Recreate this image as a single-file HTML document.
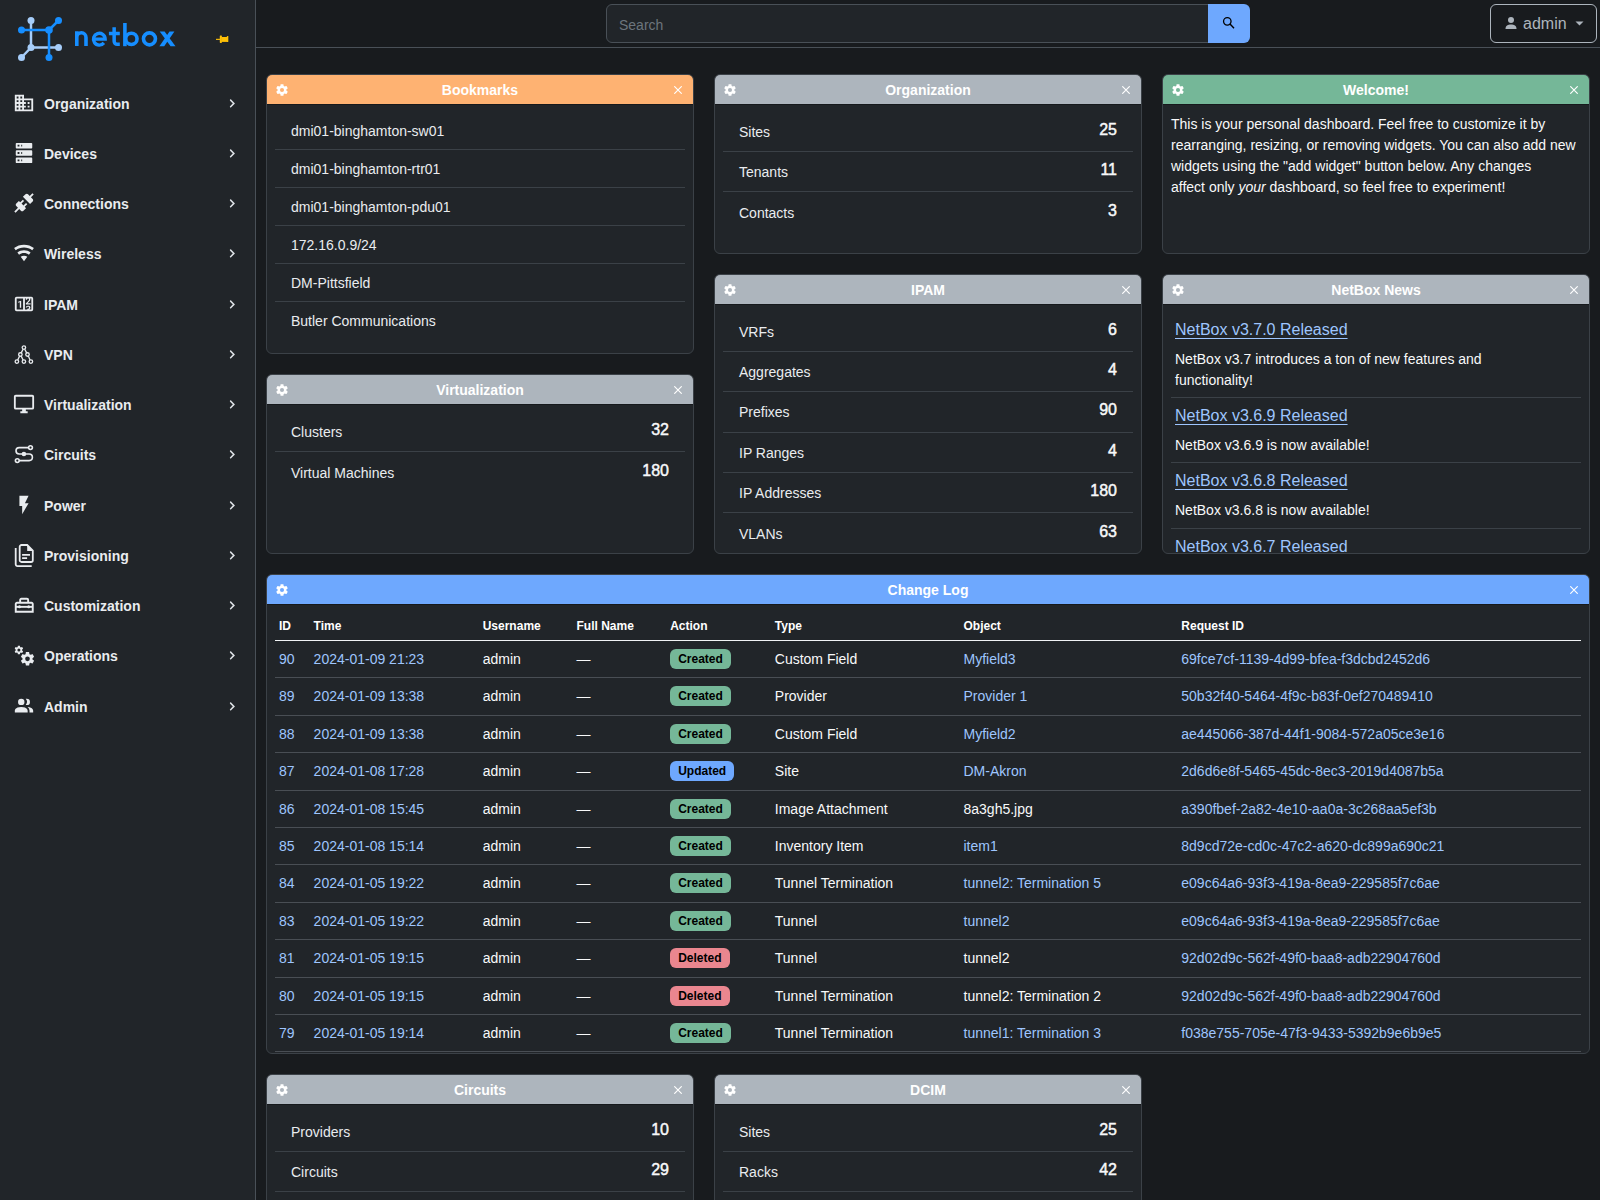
<!DOCTYPE html>
<html><head><meta charset="utf-8">
<style>
*{box-sizing:border-box;margin:0;padding:0}
html,body{width:1600px;height:1200px;overflow:hidden}
body{background:#181b1e;font-family:"Liberation Sans",sans-serif;font-size:14px;line-height:21px;color:#f8f9fa;position:relative}
.sb{position:absolute;left:0;top:0;width:256px;height:1200px;background:#212529;border-right:1px solid #495057}
.nav{position:absolute;left:0;width:255px;height:40px}
.nav .ic{position:absolute;left:13px;top:0;width:22px;height:22px}
.nav .ic svg{width:22px;height:22px;fill:#e9ecef;display:block}
.nav .t{position:absolute;left:44px;top:0;font-weight:bold;font-size:14px;line-height:21px;color:#e9ecef}
.nav .ch{position:absolute;left:229px;top:0}
.top{position:absolute;left:256px;top:0;width:1344px;height:48px;border-bottom:1px solid #495057;background:#181b1e}
.search{position:absolute;left:606px;top:4px;width:603px;height:39px;border:1px solid #495057;border-radius:6px 0 0 6px;background:#212529;color:#6c757d;padding:10px 12px 0 12px;font-size:14px;line-height:21px}
.sbtn{position:absolute;left:1208px;top:4px;width:42px;height:39px;background:#6ea8fe;border-radius:0 6px 6px 0}
.admin{position:absolute;left:1490px;top:4px;width:107px;height:39px;border:1px solid #adb5bd;border-radius:6px;color:#adb5bd;font-size:16px;line-height:21px}
.card{position:absolute;background:#212529;border:1px solid #3b4147;border-radius:6px;overflow:hidden}
.ch2{height:30px;border-bottom:1px solid #16191c;position:relative;text-align:center;color:#fff;font-weight:bold;line-height:30px;padding-top:0;font-size:14px}
.ch2 .g{position:absolute;left:8px;top:7.5px;width:14px;height:14px}
.ch2 .x{position:absolute;right:11px;top:10.5px;width:8px;height:8px}
.orange{background:#feb272}.gray{background:#adb5bd}.green{background:#75b798}.blue{background:#6ea8fe}
.body{padding:7px 8px 0 8px}
.li{border-bottom:1px solid #3b4147;padding:9px 16px 7px;line-height:21px;color:#e9ecef}
.li:last-child{border-bottom:0}
.cnt{display:flex;justify-content:space-between;align-items:center;height:40.2px;padding:0 16px;border-bottom:1px solid #3b4147;color:#e9ecef}
.cnt:last-child{border-bottom:0}
.cnt span{position:relative;top:1px}
.cnt b{font-size:16px;line-height:19px;margin-bottom:4px;font-weight:normal;-webkit-text-stroke:0.45px #f8f9fa;color:#f8f9fa}
a,.lk{color:#9ec5fe;text-decoration:none}
.welcome{padding:1.5px 0 0 0;color:#f8f9fa;line-height:21px}
.news{border-bottom:1px solid #3b4147;padding:8px 4px}
.nt{font-size:16px;color:#9ec5fe;text-decoration:underline;text-underline-offset:3px;line-height:19.2px;margin-bottom:8px}
.nd{color:#f8f9fa;position:relative;top:1.5px}
.tbl{position:relative}
.thr{position:relative;height:36px;margin-top:-7px;margin-left:0;border-bottom:1px solid #f1f3f5;font-weight:bold;font-size:12px}
.thr .td{position:absolute;top:12px;padding:0 4px;line-height:18px;color:#fff}
.tr{position:relative;height:37.42px;border-bottom:1px solid #494e54}
.tr .td{position:absolute;top:8px;padding:0 4px;line-height:21px;white-space:nowrap;color:#f8f9fa}
.badge{display:inline-block;font-size:12px;font-weight:bold;line-height:12px;padding:4px 8px;border-radius:6px;color:#000;vertical-align:1px}
.bg-g{background:#75b798}.bg-b{background:#6ea8fe}.bg-r{background:#ea868f}
</style></head><body>

<!-- SIDEBAR -->
<div class="sb">
  <svg style="position:absolute;left:0;top:0" width="256" height="70">
    <g stroke-linecap="round">
      <line x1="31" y1="20.5" x2="31" y2="47.5" stroke="#a6cdf9" stroke-width="2.5"/>
      <line x1="31" y1="47.5" x2="58.5" y2="47.5" stroke="#a6cdf9" stroke-width="2.5"/>
      <line x1="31" y1="47.5" x2="21.5" y2="57.5" stroke="#a6cdf9" stroke-width="2.5"/>
      <circle cx="31" cy="20.5" r="3.5" fill="#a6cdf9"/>
      <circle cx="31" cy="47.5" r="3.5" fill="#a6cdf9"/>
      <circle cx="21.5" cy="57.5" r="3.5" fill="#a6cdf9"/>
      <circle cx="58.5" cy="47.5" r="3.5" fill="#a6cdf9"/>
      <line x1="21.5" y1="30" x2="49" y2="30" stroke="#168eff" stroke-width="2.5"/>
      <line x1="49" y1="30" x2="49" y2="57.5" stroke="#168eff" stroke-width="2.5"/>
      <line x1="49" y1="30" x2="58.5" y2="20.5" stroke="#168eff" stroke-width="2.5"/>
      <circle cx="21.5" cy="30" r="3.5" fill="#168eff"/>
      <circle cx="49" cy="30" r="3.8" fill="#168eff"/>
      <circle cx="58.5" cy="20.5" r="3.5" fill="#168eff"/>
      <circle cx="49" cy="57.5" r="3.5" fill="#168eff"/>
    </g>
    <g fill="none" stroke="#168eff" stroke-width="3.6">
      <path d="M76.8 46V31.3M76.8 37.4A4.6 4.6 0 0 1 86 37.4V46"/>
      <path d="M93.6 39.1H105.2A5.9 5.9 0 1 0 103.9 42.9" stroke-width="3.3"/>
      <path d="M114.15 27.2V41.3A3 3 0 0 0 117.15 44.3H119.8M108.9 33.6H119.8" stroke-width="3.5"/>
      <path d="M124.9 23V46.2"/>
      <circle cx="131.4" cy="38.85" r="5.65"/>
      <circle cx="149.45" cy="38.85" r="6"/>
    </g>
    <g fill="#168eff">
      <polygon points="159.7,31.5 164.6,31.5 175.5,46.2 170.6,46.2"/>
      <polygon points="169.5,31.5 174.4,31.5 164.2,46.2 159.4,46.2"/>
    </g>
    <g fill="#ffc107">
      <rect x="216" y="38.8" width="4.5" height="1.1"/>
      <rect x="219.8" y="35.5" width="2.1" height="7.4" rx="0.6"/>
      <rect x="221.5" y="37" width="5.8" height="4.9"/>
      <rect x="226.9" y="35.9" width="1.4" height="6.1" rx="0.5"/>
    </g>
  </svg>
  <div class="nav" style="top:93.65px"><div class="ic" style="top:-2px"><svg viewBox="0 0 24 24" overflow="visible"><path d="M18,15H16V17H18M18,11H16V13H18M20,19H12V17H14V15H12V13H14V11H12V9H20M10,7H8V5H10M10,11H8V9H10M10,15H8V13H10M10,19H8V17H10M6,7H4V5H6M6,11H4V9H6M6,15H4V13H6M6,19H4V17H6M12,7V3H2V21H22V7H12Z"/></svg></div><div class="t">Organization</div><svg class="ch" style="top:5px" width="7" height="9" viewBox="0 0 7 9"><path d="M1.6 1.1L4.9 4.4L1.6 7.7" fill="none" stroke="#dee2e6" stroke-width="1.5" stroke-linecap="round"/></svg></div>
<div class="nav" style="top:143.90px"><div class="ic" style="top:-2px"><svg viewBox="0 0 24 24" overflow="visible"><path d="M4,1H20A1,1 0 0,1 21,2V6A1,1 0 0,1 20,7H4A1,1 0 0,1 3,6V2A1,1 0 0,1 4,1M4,9H20A1,1 0 0,1 21,10V14A1,1 0 0,1 20,15H4A1,1 0 0,1 3,14V10A1,1 0 0,1 4,9M4,17H20A1,1 0 0,1 21,18V22A1,1 0 0,1 20,23H4A1,1 0 0,1 3,22V18A1,1 0 0,1 4,17M9,5H10V3H9V5M9,13H10V11H9V13M9,21H10V19H9V21M5,3V5H7V3H5M5,11V13H7V11H5M5,19V21H7V19H5Z"/></svg></div><div class="t">Devices</div><svg class="ch" style="top:5px" width="7" height="9" viewBox="0 0 7 9"><path d="M1.6 1.1L4.9 4.4L1.6 7.7" fill="none" stroke="#dee2e6" stroke-width="1.5" stroke-linecap="round"/></svg></div>
<div class="nav" style="top:194.15px"><div class="ic" style="top:-2px"><svg viewBox="0 0 24 24" overflow="visible"><path d="M21.4 7.5C22.2 8.3 22.2 9.6 21.4 10.3L18.6 13.1L10.8 5.3L13.6 2.5C14.4 1.7 15.7 1.7 16.4 2.5L18.2 4.3L21.2 1.3L22.6 2.7L19.6 5.7L21.4 7.5M15.6 13.3L14.2 11.9L11.4 14.7L9.3 12.6L12.1 9.8L10.7 8.4L7.9 11.2L6.4 9.8L3.6 12.6C2.8 13.4 2.8 14.7 3.6 15.4L5.4 17.2L1.4 21.2L2.8 22.6L6.8 18.6L8.6 20.4C9.4 21.2 10.7 21.2 11.4 20.4L14.2 17.6L12.8 16.2L15.6 13.3Z"/></svg></div><div class="t">Connections</div><svg class="ch" style="top:5px" width="7" height="9" viewBox="0 0 7 9"><path d="M1.6 1.1L4.9 4.4L1.6 7.7" fill="none" stroke="#dee2e6" stroke-width="1.5" stroke-linecap="round"/></svg></div>
<div class="nav" style="top:244.40px"><div class="ic" style="top:-2px"><svg viewBox="0 0 24 24" overflow="visible"><path d="M12,21L15.6,16.2C14.6,15.45 13.35,15 12,15C10.65,15 9.4,15.45 8.4,16.2L12,21M12,3C7.95,3 4.21,4.34 1.2,6.6L3,9C5.5,7.12 8.62,6 12,6C15.38,6 18.5,7.12 21,9L22.8,6.6C19.79,4.34 16.05,3 12,3M12,9C9.3,9 6.81,9.89 4.8,11.4L6.6,13.8C8.1,12.67 9.97,12 12,12C14.03,12 15.9,12.670 17.4,13.8L19.2,11.4C17.19,9.89 14.7,9 12,9Z"/></svg></div><div class="t">Wireless</div><svg class="ch" style="top:5px" width="7" height="9" viewBox="0 0 7 9"><path d="M1.6 1.1L4.9 4.4L1.6 7.7" fill="none" stroke="#dee2e6" stroke-width="1.5" stroke-linecap="round"/></svg></div>
<div class="nav" style="top:294.65px"><div class="ic" style="top:-2px"><svg viewBox="0 0 24 24" overflow="visible"><path d="M4,4H20A2,2 0 0,1 22,6V18A2,2 0 0,1 20,20H4A2,2 0 0,1 2,18V6A2,2 0 0,1 4,4M4,6V18H11V6H4M20,18V6H18.76C19,6.54 18.950,7.07 18.95,7.13C18.88,7.8 18.41,8.5 18.24,8.75L15.91,11.3L19.23,11.28L19.24,12.5L14.04,12.47L14,11.47C14,11.47 17.05,8.24 17.2,7.95C17.34,7.67 17.91,6 16.5,6C15.27,6.05 15.41,7.3 15.41,7.3L13.87,7.31C13.87,7.31 13.88,6.65 14.25,6H13V18H15.58L15.57,17.14L16.54,17.13C16.54,17.13 17.45,16.97 17.46,16.08C17.5,15.08 16.65,15.08 16.5,15.08C16.37,15.08 15.43,15.13 15.43,15.95H13.91C13.910,15.95 13.95,13.89 16.5,13.89C19.1,13.89 18.96,15.91 18.96,15.91C18.96,15.91 19,17.16 17.85,17.63L18.37,18H20M8.92,16H7.42V10.2L5.62,10.76V9.53L8.76,8.41H8.92V16Z"/></svg></div><div class="t">IPAM</div><svg class="ch" style="top:5px" width="7" height="9" viewBox="0 0 7 9"><path d="M1.6 1.1L4.9 4.4L1.6 7.7" fill="none" stroke="#dee2e6" stroke-width="1.5" stroke-linecap="round"/></svg></div>
<div class="nav" style="top:344.90px"><div class="ic" style="top:-2px"><svg viewBox="0 0 24 24" overflow="visible"><g transform="scale(1.0909) translate(-1 -1)"><g fill="none" stroke="#e9ecef" stroke-width="1.3"><circle cx="11.9" cy="5.6" r="1.75"/><circle cx="8.4" cy="12.5" r="1.75"/><circle cx="15.5" cy="12.5" r="1.75"/><circle cx="4.9" cy="19.6" r="1.75"/><circle cx="11.9" cy="19.6" r="1.75"/><circle cx="18.9" cy="19.6" r="1.75"/><path d="M11.1 7.2L9.2 10.9M12.7 7.2L14.7 10.9M7.6 14.1L5.7 18M9.2 14.1L11.1 18M16.3 14.1L18.1 18"/></g></g></svg></div><div class="t">VPN</div><svg class="ch" style="top:5px" width="7" height="9" viewBox="0 0 7 9"><path d="M1.6 1.1L4.9 4.4L1.6 7.7" fill="none" stroke="#dee2e6" stroke-width="1.5" stroke-linecap="round"/></svg></div>
<div class="nav" style="top:395.15px"><div class="ic" style="top:-2px"><svg viewBox="0 0 24 24" overflow="visible"><path d="M21,16H3V4H21M21,2H3C1.89,2 1,2.89 1,4V16A2,2 0 0,0 3,18H10V20H8V22H16V20H14V18H21A2,2 0 0,0 23,16V4C23,2.89 22.1,2 21,2Z"/></svg></div><div class="t">Virtualization</div><svg class="ch" style="top:5px" width="7" height="9" viewBox="0 0 7 9"><path d="M1.6 1.1L4.9 4.4L1.6 7.7" fill="none" stroke="#dee2e6" stroke-width="1.5" stroke-linecap="round"/></svg></div>
<div class="nav" style="top:445.40px"><div class="ic" style="top:-2px"><svg viewBox="0 0 24 24" overflow="visible"><g transform="scale(1.0909) translate(-1 -1)"><g fill="none" stroke="#e9ecef" stroke-width="1.6"><circle cx="18.5" cy="5.6" r="1.9"/><circle cx="5.3" cy="18.6" r="1.9"/><path d="M16.6 5.6H7.2A3.2 3.2 0 0 0 7.2 12H17.1A3.3 3.3 0 0 1 17.1 18.6H7.2"/></g><circle cx="11.9" cy="12" r="2.3" fill="#e9ecef"/></g></svg></div><div class="t">Circuits</div><svg class="ch" style="top:5px" width="7" height="9" viewBox="0 0 7 9"><path d="M1.6 1.1L4.9 4.4L1.6 7.7" fill="none" stroke="#dee2e6" stroke-width="1.5" stroke-linecap="round"/></svg></div>
<div class="nav" style="top:495.65px"><div class="ic" style="top:-2px"><svg viewBox="0 0 24 24" overflow="visible"><path d="M7,2V13H10V22L17,10H13L17,2H7Z"/></svg></div><div class="t">Power</div><svg class="ch" style="top:5px" width="7" height="9" viewBox="0 0 7 9"><path d="M1.6 1.1L4.9 4.4L1.6 7.7" fill="none" stroke="#dee2e6" stroke-width="1.5" stroke-linecap="round"/></svg></div>
<div class="nav" style="top:545.90px"><div class="ic" style="top:-2px"><svg viewBox="0 0 24 24" overflow="visible"><g transform="scale(1.0909) translate(-1 -1)"><g fill="none" stroke="#e9ecef" stroke-width="1.8"><path d="M9.5 2H15.2L20.8 7.6V17.2A1.8 1.8 0 0 1 19 19H9.5A1.8 1.8 0 0 1 7.7 17.2V3.8A1.8 1.8 0 0 1 9.5 2Z"/><path d="M3.7 5.1V21.3A1.8 1.8 0 0 0 5.5 23.1H19.7"/><path d="M10.1 11.9H18M10.1 15.2H15.1"/></g><path d="M15.2 2V7.9H20.9Z" fill="#e9ecef"/></g></svg></div><div class="t">Provisioning</div><svg class="ch" style="top:5px" width="7" height="9" viewBox="0 0 7 9"><path d="M1.6 1.1L4.9 4.4L1.6 7.7" fill="none" stroke="#dee2e6" stroke-width="1.5" stroke-linecap="round"/></svg></div>
<div class="nav" style="top:596.15px"><div class="ic" style="top:-2px"><svg viewBox="0 0 24 24" overflow="visible"><g transform="scale(1.0909) translate(-1 -1)"><g fill="none" stroke="#e9ecef" stroke-width="1.9"><path d="M3.75 18.8V11A1.2 1.2 0 0 1 4.95 9.8H19.55A1.2 1.2 0 0 1 20.75 11V18.8Z"/><path d="M8.15 9.8V6.9A1.2 1.2 0 0 1 9.35 5.7H14.95A1.2 1.2 0 0 1 16.15 6.9V9.8"/><path d="M3.75 13.85H20.75"/></g><circle cx="7.5" cy="13.85" r="1.5" fill="#e9ecef"/><circle cx="16.7" cy="13.85" r="1.5" fill="#e9ecef"/></g></svg></div><div class="t">Customization</div><svg class="ch" style="top:5px" width="7" height="9" viewBox="0 0 7 9"><path d="M1.6 1.1L4.9 4.4L1.6 7.7" fill="none" stroke="#dee2e6" stroke-width="1.5" stroke-linecap="round"/></svg></div>
<div class="nav" style="top:646.40px"><div class="ic" style="top:-2px"><svg viewBox="0 0 24 24" overflow="visible"><g transform="scale(1.0909) translate(-1 -1)"><g transform="translate(7.46,7.76) scale(0.67)"><path d="M12,15.5A3.5,3.5 0 0,1 8.5,12A3.5,3.5 0 0,1 12,8.5A3.5,3.5 0 0,1 15.5,12A3.5,3.5 0 0,1 12,15.5M19.43,12.97C19.47,12.65 19.5,12.33 19.5,12C19.5,11.67 19.47,11.34 19.43,11L21.54,9.37C21.73,9.22 21.78,8.95 21.66,8.73L19.66,5.27C19.54,5.05 19.27,4.96 19.05,5.05L16.56,6.05C16.04,5.66 15.5,5.32 14.87,5.07L14.5,2.42C14.46,2.18 14.25,2 14,2H10C9.750,2 9.54,2.18 9.5,2.42L9.13,5.07C8.5,5.32 7.96,5.66 7.44,6.05L4.95,5.05C4.73,4.96 4.46,5.05 4.34,5.27L2.34,8.73C2.21,8.95 2.27,9.22 2.46,9.37L4.57,11C4.53,11.34 4.5,11.67 4.5,12C4.5,12.33 4.53,12.65 4.57,12.97L2.46,14.63C2.27,14.78 2.21,15.05 2.34,15.27L4.34,18.73C4.46,18.95 4.73,19.03 4.95,18.95L7.44,17.94C7.96,18.34 8.5,18.68 9.13,18.93L9.5,21.58C9.54,21.820 9.75,22 10,22H14C14.25,22 14.46,21.82 14.5,21.58L14.87,18.93C15.5,18.67 16.04,18.34 16.56,17.94L19.05,18.95C19.27,19.03 19.54,18.95 19.66,18.73L21.66,15.27C21.78,15.05 21.73,14.78 21.54,14.63L19.43,12.97Z"/></g><g transform="translate(1.74,1.84) scale(0.43)"><path d="M12,15.5A3.5,3.5 0 0,1 8.5,12A3.5,3.5 0 0,1 12,8.5A3.5,3.5 0 0,1 15.5,12A3.5,3.5 0 0,1 12,15.5M19.43,12.97C19.47,12.65 19.5,12.33 19.5,12C19.5,11.67 19.47,11.34 19.43,11L21.54,9.37C21.73,9.22 21.78,8.95 21.66,8.73L19.66,5.27C19.54,5.05 19.27,4.96 19.05,5.05L16.56,6.05C16.04,5.66 15.5,5.32 14.87,5.07L14.5,2.42C14.46,2.18 14.25,2 14,2H10C9.75,2 9.54,2.18 9.5,2.42L9.13,5.07C8.5,5.32 7.96,5.66 7.44,6.05L4.95,5.05C4.73,4.96 4.46,5.05 4.34,5.27L2.34,8.73C2.21,8.95 2.27,9.22 2.46,9.37L4.57,11C4.53,11.34 4.5,11.67 4.5,12C4.5,12.33 4.53,12.65 4.57,12.97L2.46,14.63C2.27,14.78 2.21,15.05 2.34,15.27L4.34,18.73C4.46,18.95 4.73,19.03 4.95,18.95L7.44,17.94C7.96,18.34 8.5,18.68 9.13,18.93L9.5,21.58C9.54,21.82 9.75,22 10,22H14C14.25,22 14.46,21.82 14.5,21.58L14.87,18.93C15.5,18.67 16.04,18.34 16.56,17.94L19.05,18.95C19.27,19.03 19.54,18.95 19.66,18.73L21.66,15.27C21.78,15.05 21.73,14.78 21.54,14.63L19.43,12.97Z"/></g></g></svg></div><div class="t">Operations</div><svg class="ch" style="top:5px" width="7" height="9" viewBox="0 0 7 9"><path d="M1.6 1.1L4.9 4.4L1.6 7.7" fill="none" stroke="#dee2e6" stroke-width="1.5" stroke-linecap="round"/></svg></div>
<div class="nav" style="top:696.65px"><div class="ic" style="top:-2px"><svg viewBox="0 0 24 24" overflow="visible"><path d="M16 17V19H2V17S2 13 9 13 16 17 16 17M12.5 7.5A3.5 3.5 0 1 0 9 11A3.5 3.5 0 0 0 12.5 7.5M15.94 13A5.32 5.32 0 0 1 18 17V19H22V17S22 13.37 15.94 13M15 4A3.39 3.39 0 0 0 13.880 4.19A5 5 0 0 1 13.88 10.81A3.39 3.39 0 0 0 15 11A3.5 3.5 0 0 0 18.5 7.5A3.5 3.5 0 0 0 15 4Z"/></svg></div><div class="t">Admin</div><svg class="ch" style="top:5px" width="7" height="9" viewBox="0 0 7 9"><path d="M1.6 1.1L4.9 4.4L1.6 7.7" fill="none" stroke="#dee2e6" stroke-width="1.5" stroke-linecap="round"/></svg></div>
</div>

<!-- TOP BAR -->
<div class="top"></div>
<div class="search">Search</div>
<div class="sbtn"><svg style="position:absolute;left:12px;top:11px" width="18" height="18" viewBox="0 0 18 18"><circle cx="7.3" cy="6.3" r="3.75" fill="none" stroke="#000" stroke-width="1.3"/><line x1="10" y1="9" x2="14" y2="13.2" stroke="#000" stroke-width="1.4"/></svg></div>
<div class="admin">
  <svg style="position:absolute;left:13px;top:11px" width="14" height="14" viewBox="0 0 14 14"><circle cx="7" cy="4" r="3" fill="#adb5bd"/><path d="M1.5 13 C1.5 9.5 4 8.6 7 8.6 C10 8.6 12.5 9.5 12.5 13Z" fill="#adb5bd"/></svg>
  <span style="position:absolute;left:32px;top:8px">admin</span>
  <svg style="position:absolute;left:84px;top:16px" width="10" height="6"><path d="M0.5 0.5 L8.5 0.5 L4.5 4.5Z" fill="#adb5bd"/></svg>
</div>

<div class="card" style="left:266px;top:74px;width:428px;height:280px"><div class="ch2 orange"><svg class="g" viewBox="0 0 24 24"><path fill="#fff" d="M12,15.5A3.5,3.5 0 0,1 8.5,12A3.5,3.5 0 0,1 12,8.5A3.5,3.5 0 0,1 15.5,12A3.5,3.5 0 0,1 12,15.5M19.43,12.97C19.47,12.65 19.5,12.33 19.5,12C19.5,11.67 19.47,11.34 19.43,11L21.54,9.37C21.73,9.22 21.78,8.95 21.66,8.73L19.66,5.27C19.54,5.05 19.27,4.96 19.05,5.05L16.56,6.05C16.04,5.66 15.5,5.32 14.87,5.07L14.5,2.42C14.46,2.18 14.25,2 14,2H10C9.75,2 9.54,2.18 9.5,2.42L9.13,5.07C8.5,5.32 7.96,5.66 7.44,6.05L4.95,5.05C4.73,4.96 4.46,5.05 4.34,5.27L2.34,8.73C2.21,8.95 2.27,9.22 2.46,9.37L4.57,11C4.53,11.34 4.5,11.67 4.5,12C4.5,12.33 4.53,12.65 4.57,12.97L2.46,14.63C2.27,14.78 2.21,15.05 2.34,15.27L4.34,18.73C4.46,18.95 4.73,19.03 4.95,18.95L7.44,17.94C7.96,18.34 8.5,18.68 9.13,18.93L9.5,21.58C9.54,21.82 9.75,22 10,22H14C14.25,22 14.46,21.82 14.5,21.58L14.87,18.93C15.5,18.67 16.04,18.34 16.56,17.94L19.05,18.95C19.27,19.03 19.54,18.95 19.66,18.73L21.66,15.27C21.78,15.05 21.73,14.78 21.54,14.63L19.43,12.97Z"/></svg>Bookmarks<svg class="x" viewBox="0 0 8 8"><path d="M0.3 0.3L7.7 7.7M7.7 0.3L0.3 7.7" stroke="#fff" stroke-width="1.15"/></svg></div><div class="body"><div class="li">dmi01-binghamton-sw01</div><div class="li">dmi01-binghamton-rtr01</div><div class="li">dmi01-binghamton-pdu01</div><div class="li">172.16.0.9/24</div><div class="li">DM-Pittsfield</div><div class="li">Butler Communications</div></div></div>
<div class="card" style="left:714px;top:74px;width:428px;height:180px"><div class="ch2 gray"><svg class="g" viewBox="0 0 24 24"><path fill="#fff" d="M12,15.5A3.5,3.5 0 0,1 8.5,12A3.5,3.5 0 0,1 12,8.5A3.5,3.5 0 0,1 15.5,12A3.5,3.5 0 0,1 12,15.5M19.43,12.97C19.47,12.65 19.5,12.33 19.5,12C19.5,11.67 19.47,11.34 19.43,11L21.54,9.37C21.73,9.22 21.78,8.95 21.66,8.73L19.66,5.27C19.54,5.05 19.27,4.96 19.05,5.05L16.56,6.05C16.04,5.66 15.5,5.32 14.87,5.07L14.5,2.42C14.46,2.18 14.25,2 14,2H10C9.75,2 9.54,2.18 9.5,2.42L9.13,5.07C8.5,5.32 7.96,5.66 7.44,6.05L4.95,5.05C4.73,4.96 4.46,5.05 4.34,5.27L2.34,8.73C2.21,8.95 2.27,9.22 2.46,9.37L4.57,11C4.53,11.34 4.5,11.67 4.5,12C4.5,12.33 4.53,12.65 4.57,12.97L2.46,14.63C2.27,14.78 2.21,15.05 2.34,15.27L4.34,18.73C4.46,18.95 4.73,19.03 4.95,18.95L7.44,17.94C7.96,18.34 8.5,18.68 9.13,18.93L9.5,21.58C9.54,21.82 9.75,22 10,22H14C14.25,22 14.46,21.82 14.5,21.58L14.87,18.93C15.5,18.67 16.04,18.34 16.56,17.94L19.05,18.95C19.27,19.03 19.54,18.95 19.66,18.73L21.66,15.27C21.78,15.05 21.73,14.78 21.54,14.63L19.43,12.97Z"/></svg>Organization<svg class="x" viewBox="0 0 8 8"><path d="M0.3 0.3L7.7 7.7M7.7 0.3L0.3 7.7" stroke="#fff" stroke-width="1.15"/></svg></div><div class="body"><div class="cnt"><span>Sites</span><b>25</b></div><div class="cnt"><span>Tenants</span><b>11</b></div><div class="cnt"><span>Contacts</span><b>3</b></div></div></div>
<div class="card" style="left:1162px;top:74px;width:428px;height:180px"><div class="ch2 green"><svg class="g" viewBox="0 0 24 24"><path fill="#fff" d="M12,15.5A3.5,3.5 0 0,1 8.5,12A3.5,3.5 0 0,1 12,8.5A3.5,3.5 0 0,1 15.5,12A3.5,3.5 0 0,1 12,15.5M19.43,12.97C19.47,12.65 19.5,12.33 19.5,12C19.5,11.67 19.47,11.34 19.43,11L21.54,9.37C21.73,9.22 21.78,8.95 21.66,8.73L19.66,5.27C19.54,5.05 19.27,4.96 19.05,5.05L16.56,6.05C16.04,5.66 15.5,5.32 14.87,5.07L14.5,2.42C14.46,2.18 14.25,2 14,2H10C9.75,2 9.54,2.18 9.5,2.42L9.13,5.07C8.5,5.32 7.96,5.66 7.44,6.05L4.95,5.05C4.73,4.96 4.46,5.05 4.34,5.27L2.34,8.73C2.21,8.95 2.27,9.22 2.46,9.37L4.57,11C4.53,11.34 4.5,11.67 4.5,12C4.5,12.33 4.53,12.65 4.57,12.97L2.46,14.63C2.27,14.78 2.21,15.05 2.34,15.27L4.34,18.73C4.46,18.95 4.73,19.03 4.95,18.95L7.44,17.94C7.96,18.34 8.5,18.68 9.13,18.93L9.5,21.58C9.54,21.82 9.75,22 10,22H14C14.25,22 14.46,21.82 14.5,21.58L14.87,18.93C15.5,18.67 16.04,18.34 16.56,17.94L19.05,18.95C19.27,19.03 19.54,18.95 19.66,18.73L21.66,15.27C21.78,15.05 21.73,14.78 21.54,14.63L19.43,12.97Z"/></svg>Welcome!<svg class="x" viewBox="0 0 8 8"><path d="M0.3 0.3L7.7 7.7M7.7 0.3L0.3 7.7" stroke="#fff" stroke-width="1.15"/></svg></div><div class="body"><div class="welcome">This is your personal dashboard. Feel free to customize it by<br>rearranging, resizing, or removing widgets. You can also add new<br>widgets using the "add widget" button below. Any changes<br>affect only <i>your</i> dashboard, so feel free to experiment!</div></div></div>
<div class="card" style="left:266px;top:374px;width:428px;height:180px"><div class="ch2 gray"><svg class="g" viewBox="0 0 24 24"><path fill="#fff" d="M12,15.5A3.5,3.5 0 0,1 8.5,12A3.5,3.5 0 0,1 12,8.5A3.5,3.5 0 0,1 15.5,12A3.5,3.5 0 0,1 12,15.5M19.43,12.97C19.47,12.65 19.5,12.33 19.5,12C19.5,11.67 19.47,11.34 19.43,11L21.54,9.37C21.73,9.22 21.78,8.95 21.66,8.73L19.66,5.27C19.54,5.05 19.27,4.96 19.05,5.05L16.56,6.05C16.04,5.66 15.5,5.32 14.87,5.07L14.5,2.42C14.46,2.18 14.25,2 14,2H10C9.75,2 9.54,2.18 9.5,2.42L9.13,5.07C8.5,5.32 7.96,5.66 7.44,6.05L4.95,5.05C4.73,4.96 4.46,5.05 4.34,5.27L2.34,8.73C2.21,8.95 2.27,9.22 2.46,9.37L4.57,11C4.53,11.34 4.5,11.67 4.5,12C4.5,12.33 4.53,12.65 4.57,12.97L2.46,14.63C2.27,14.78 2.21,15.05 2.34,15.27L4.34,18.73C4.46,18.95 4.73,19.03 4.95,18.95L7.44,17.94C7.96,18.34 8.5,18.68 9.13,18.93L9.5,21.58C9.54,21.82 9.75,22 10,22H14C14.25,22 14.46,21.82 14.5,21.58L14.87,18.93C15.5,18.67 16.04,18.34 16.56,17.94L19.05,18.95C19.27,19.03 19.54,18.95 19.66,18.73L21.66,15.27C21.78,15.05 21.73,14.78 21.54,14.63L19.43,12.97Z"/></svg>Virtualization<svg class="x" viewBox="0 0 8 8"><path d="M0.3 0.3L7.7 7.7M7.7 0.3L0.3 7.7" stroke="#fff" stroke-width="1.15"/></svg></div><div class="body"><div class="cnt"><span>Clusters</span><b>32</b></div><div class="cnt"><span>Virtual Machines</span><b>180</b></div></div></div>
<div class="card" style="left:714px;top:274px;width:428px;height:280px"><div class="ch2 gray"><svg class="g" viewBox="0 0 24 24"><path fill="#fff" d="M12,15.5A3.5,3.5 0 0,1 8.5,12A3.5,3.5 0 0,1 12,8.5A3.5,3.5 0 0,1 15.5,12A3.5,3.5 0 0,1 12,15.5M19.43,12.97C19.47,12.65 19.5,12.33 19.5,12C19.5,11.67 19.47,11.34 19.43,11L21.54,9.37C21.73,9.22 21.78,8.95 21.66,8.73L19.66,5.27C19.54,5.05 19.27,4.96 19.05,5.05L16.56,6.05C16.04,5.66 15.5,5.32 14.87,5.07L14.5,2.42C14.46,2.18 14.25,2 14,2H10C9.75,2 9.54,2.18 9.5,2.42L9.13,5.07C8.5,5.32 7.96,5.66 7.44,6.05L4.95,5.05C4.73,4.96 4.46,5.05 4.34,5.27L2.34,8.73C2.21,8.95 2.27,9.22 2.46,9.37L4.57,11C4.53,11.34 4.5,11.67 4.5,12C4.5,12.33 4.53,12.65 4.57,12.97L2.46,14.63C2.27,14.78 2.21,15.05 2.34,15.27L4.34,18.73C4.46,18.95 4.73,19.03 4.95,18.95L7.44,17.94C7.96,18.34 8.5,18.68 9.13,18.93L9.5,21.58C9.54,21.82 9.75,22 10,22H14C14.25,22 14.46,21.82 14.5,21.58L14.87,18.93C15.5,18.67 16.04,18.34 16.56,17.94L19.05,18.95C19.27,19.03 19.54,18.95 19.66,18.73L21.66,15.27C21.78,15.05 21.73,14.78 21.54,14.63L19.43,12.97Z"/></svg>IPAM<svg class="x" viewBox="0 0 8 8"><path d="M0.3 0.3L7.7 7.7M7.7 0.3L0.3 7.7" stroke="#fff" stroke-width="1.15"/></svg></div><div class="body"><div class="cnt"><span>VRFs</span><b>6</b></div><div class="cnt"><span>Aggregates</span><b>4</b></div><div class="cnt"><span>Prefixes</span><b>90</b></div><div class="cnt"><span>IP Ranges</span><b>4</b></div><div class="cnt"><span>IP Addresses</span><b>180</b></div><div class="cnt"><span>VLANs</span><b>63</b></div></div></div>
<div class="card" style="left:1162px;top:274px;width:428px;height:280px"><div class="ch2 gray"><svg class="g" viewBox="0 0 24 24"><path fill="#fff" d="M12,15.5A3.5,3.5 0 0,1 8.5,12A3.5,3.5 0 0,1 12,8.5A3.5,3.5 0 0,1 15.5,12A3.5,3.5 0 0,1 12,15.5M19.43,12.97C19.47,12.65 19.5,12.33 19.5,12C19.5,11.67 19.47,11.34 19.43,11L21.54,9.37C21.73,9.22 21.78,8.95 21.66,8.73L19.66,5.27C19.54,5.05 19.27,4.96 19.05,5.05L16.56,6.05C16.04,5.66 15.5,5.32 14.87,5.07L14.5,2.42C14.46,2.18 14.25,2 14,2H10C9.75,2 9.54,2.18 9.5,2.42L9.13,5.07C8.5,5.32 7.96,5.66 7.44,6.05L4.95,5.05C4.73,4.96 4.46,5.05 4.34,5.27L2.34,8.73C2.21,8.95 2.27,9.22 2.46,9.37L4.57,11C4.53,11.34 4.5,11.67 4.5,12C4.5,12.33 4.53,12.65 4.57,12.97L2.46,14.63C2.27,14.78 2.21,15.05 2.34,15.27L4.34,18.73C4.46,18.95 4.73,19.03 4.95,18.95L7.44,17.94C7.96,18.34 8.5,18.68 9.13,18.93L9.5,21.58C9.54,21.82 9.75,22 10,22H14C14.25,22 14.46,21.82 14.5,21.58L14.87,18.93C15.5,18.67 16.04,18.34 16.56,17.94L19.05,18.95C19.27,19.03 19.54,18.95 19.66,18.73L21.66,15.27C21.78,15.05 21.73,14.78 21.54,14.63L19.43,12.97Z"/></svg>NetBox News<svg class="x" viewBox="0 0 8 8"><path d="M0.3 0.3L7.7 7.7M7.7 0.3L0.3 7.7" stroke="#fff" stroke-width="1.15"/></svg></div><div class="body"><div class="news"><div class="nt">NetBox v3.7.0 Released</div><div class="nd">NetBox v3.7 introduces a ton of new features and<br>functionality!</div></div><div class="news"><div class="nt">NetBox v3.6.9 Released</div><div class="nd">NetBox v3.6.9 is now available!</div></div><div class="news"><div class="nt">NetBox v3.6.8 Released</div><div class="nd">NetBox v3.6.8 is now available!</div></div><div class="news"><div class="nt">NetBox v3.6.7 Released</div><div class="nd">NetBox v3.6.7 is now available!</div></div></div></div>
<div class="card" style="left:266px;top:574px;width:1324px;height:480px"><div class="ch2 blue"><svg class="g" viewBox="0 0 24 24"><path fill="#fff" d="M12,15.5A3.5,3.5 0 0,1 8.5,12A3.5,3.5 0 0,1 12,8.5A3.5,3.5 0 0,1 15.5,12A3.5,3.5 0 0,1 12,15.5M19.43,12.97C19.47,12.65 19.5,12.33 19.5,12C19.5,11.67 19.47,11.34 19.43,11L21.54,9.37C21.73,9.22 21.78,8.95 21.66,8.73L19.66,5.27C19.54,5.05 19.27,4.96 19.05,5.05L16.56,6.05C16.04,5.66 15.5,5.32 14.87,5.07L14.5,2.42C14.46,2.18 14.25,2 14,2H10C9.75,2 9.54,2.18 9.5,2.42L9.13,5.07C8.5,5.32 7.96,5.66 7.44,6.05L4.95,5.05C4.73,4.96 4.46,5.05 4.34,5.27L2.34,8.73C2.21,8.95 2.27,9.22 2.46,9.37L4.57,11C4.53,11.34 4.5,11.67 4.5,12C4.5,12.33 4.53,12.65 4.57,12.97L2.46,14.63C2.27,14.78 2.21,15.05 2.34,15.27L4.34,18.73C4.46,18.95 4.73,19.03 4.95,18.95L7.44,17.94C7.96,18.34 8.5,18.68 9.13,18.93L9.5,21.58C9.54,21.82 9.75,22 10,22H14C14.25,22 14.46,21.82 14.5,21.58L14.87,18.93C15.5,18.67 16.04,18.34 16.56,17.94L19.05,18.95C19.27,19.03 19.54,18.95 19.66,18.73L21.66,15.27C21.78,15.05 21.73,14.78 21.54,14.63L19.43,12.97Z"/></svg>Change Log<svg class="x" viewBox="0 0 8 8"><path d="M0.3 0.3L7.7 7.7M7.7 0.3L0.3 7.7" stroke="#fff" stroke-width="1.15"/></svg></div><div class="body"><div class="tbl"><div class="thr"><div class="td" style="left:0.0px;width:34.6px">ID</div><div class="td" style="left:34.6px;width:169.1px">Time</div><div class="td" style="left:203.7px;width:93.8px">Username</div><div class="td" style="left:297.5px;width:93.7px">Full Name</div><div class="td" style="left:391.2px;width:104.6px">Action</div><div class="td" style="left:495.8px;width:188.7px">Type</div><div class="td" style="left:684.5px;width:217.8px">Object</div><div class="td" style="left:902.3px;width:403.7px">Request ID</div></div><div class="tr"><div class="td" style="left:0.0px;width:34.6px"><span class="lk">90</span></div><div class="td" style="left:34.6px;width:169.1px"><span class="lk">2024-01-09 21:23</span></div><div class="td" style="left:203.7px;width:93.8px">admin</div><div class="td" style="left:297.5px;width:93.7px">&mdash;</div><div class="td" style="left:391.2px;width:104.6px"><span class="badge bg-g">Created</span></div><div class="td" style="left:495.8px;width:188.7px">Custom Field</div><div class="td" style="left:684.5px;width:217.8px"><span class="lk">Myfield3</span></div><div class="td" style="left:902.3px;width:403.7px"><span class="lk">69fce7cf-1139-4d99-bfea-f3dcbd2452d6</span></div></div><div class="tr"><div class="td" style="left:0.0px;width:34.6px"><span class="lk">89</span></div><div class="td" style="left:34.6px;width:169.1px"><span class="lk">2024-01-09 13:38</span></div><div class="td" style="left:203.7px;width:93.8px">admin</div><div class="td" style="left:297.5px;width:93.7px">&mdash;</div><div class="td" style="left:391.2px;width:104.6px"><span class="badge bg-g">Created</span></div><div class="td" style="left:495.8px;width:188.7px">Provider</div><div class="td" style="left:684.5px;width:217.8px"><span class="lk">Provider 1</span></div><div class="td" style="left:902.3px;width:403.7px"><span class="lk">50b32f40-5464-4f9c-b83f-0ef270489410</span></div></div><div class="tr"><div class="td" style="left:0.0px;width:34.6px"><span class="lk">88</span></div><div class="td" style="left:34.6px;width:169.1px"><span class="lk">2024-01-09 13:38</span></div><div class="td" style="left:203.7px;width:93.8px">admin</div><div class="td" style="left:297.5px;width:93.7px">&mdash;</div><div class="td" style="left:391.2px;width:104.6px"><span class="badge bg-g">Created</span></div><div class="td" style="left:495.8px;width:188.7px">Custom Field</div><div class="td" style="left:684.5px;width:217.8px"><span class="lk">Myfield2</span></div><div class="td" style="left:902.3px;width:403.7px"><span class="lk">ae445066-387d-44f1-9084-572a05ce3e16</span></div></div><div class="tr"><div class="td" style="left:0.0px;width:34.6px"><span class="lk">87</span></div><div class="td" style="left:34.6px;width:169.1px"><span class="lk">2024-01-08 17:28</span></div><div class="td" style="left:203.7px;width:93.8px">admin</div><div class="td" style="left:297.5px;width:93.7px">&mdash;</div><div class="td" style="left:391.2px;width:104.6px"><span class="badge bg-b">Updated</span></div><div class="td" style="left:495.8px;width:188.7px">Site</div><div class="td" style="left:684.5px;width:217.8px"><span class="lk">DM-Akron</span></div><div class="td" style="left:902.3px;width:403.7px"><span class="lk">2d6d6e8f-5465-45dc-8ec3-2019d4087b5a</span></div></div><div class="tr"><div class="td" style="left:0.0px;width:34.6px"><span class="lk">86</span></div><div class="td" style="left:34.6px;width:169.1px"><span class="lk">2024-01-08 15:45</span></div><div class="td" style="left:203.7px;width:93.8px">admin</div><div class="td" style="left:297.5px;width:93.7px">&mdash;</div><div class="td" style="left:391.2px;width:104.6px"><span class="badge bg-g">Created</span></div><div class="td" style="left:495.8px;width:188.7px">Image Attachment</div><div class="td" style="left:684.5px;width:217.8px">8a3gh5.jpg</div><div class="td" style="left:902.3px;width:403.7px"><span class="lk">a390fbef-2a82-4e10-aa0a-3c268aa5ef3b</span></div></div><div class="tr"><div class="td" style="left:0.0px;width:34.6px"><span class="lk">85</span></div><div class="td" style="left:34.6px;width:169.1px"><span class="lk">2024-01-08 15:14</span></div><div class="td" style="left:203.7px;width:93.8px">admin</div><div class="td" style="left:297.5px;width:93.7px">&mdash;</div><div class="td" style="left:391.2px;width:104.6px"><span class="badge bg-g">Created</span></div><div class="td" style="left:495.8px;width:188.7px">Inventory Item</div><div class="td" style="left:684.5px;width:217.8px"><span class="lk">item1</span></div><div class="td" style="left:902.3px;width:403.7px"><span class="lk">8d9cd72e-cd0c-47c2-a620-dc899a690c21</span></div></div><div class="tr"><div class="td" style="left:0.0px;width:34.6px"><span class="lk">84</span></div><div class="td" style="left:34.6px;width:169.1px"><span class="lk">2024-01-05 19:22</span></div><div class="td" style="left:203.7px;width:93.8px">admin</div><div class="td" style="left:297.5px;width:93.7px">&mdash;</div><div class="td" style="left:391.2px;width:104.6px"><span class="badge bg-g">Created</span></div><div class="td" style="left:495.8px;width:188.7px">Tunnel Termination</div><div class="td" style="left:684.5px;width:217.8px"><span class="lk">tunnel2: Termination 5</span></div><div class="td" style="left:902.3px;width:403.7px"><span class="lk">e09c64a6-93f3-419a-8ea9-229585f7c6ae</span></div></div><div class="tr"><div class="td" style="left:0.0px;width:34.6px"><span class="lk">83</span></div><div class="td" style="left:34.6px;width:169.1px"><span class="lk">2024-01-05 19:22</span></div><div class="td" style="left:203.7px;width:93.8px">admin</div><div class="td" style="left:297.5px;width:93.7px">&mdash;</div><div class="td" style="left:391.2px;width:104.6px"><span class="badge bg-g">Created</span></div><div class="td" style="left:495.8px;width:188.7px">Tunnel</div><div class="td" style="left:684.5px;width:217.8px"><span class="lk">tunnel2</span></div><div class="td" style="left:902.3px;width:403.7px"><span class="lk">e09c64a6-93f3-419a-8ea9-229585f7c6ae</span></div></div><div class="tr"><div class="td" style="left:0.0px;width:34.6px"><span class="lk">81</span></div><div class="td" style="left:34.6px;width:169.1px"><span class="lk">2024-01-05 19:15</span></div><div class="td" style="left:203.7px;width:93.8px">admin</div><div class="td" style="left:297.5px;width:93.7px">&mdash;</div><div class="td" style="left:391.2px;width:104.6px"><span class="badge bg-r">Deleted</span></div><div class="td" style="left:495.8px;width:188.7px">Tunnel</div><div class="td" style="left:684.5px;width:217.8px">tunnel2</div><div class="td" style="left:902.3px;width:403.7px"><span class="lk">92d02d9c-562f-49f0-baa8-adb22904760d</span></div></div><div class="tr"><div class="td" style="left:0.0px;width:34.6px"><span class="lk">80</span></div><div class="td" style="left:34.6px;width:169.1px"><span class="lk">2024-01-05 19:15</span></div><div class="td" style="left:203.7px;width:93.8px">admin</div><div class="td" style="left:297.5px;width:93.7px">&mdash;</div><div class="td" style="left:391.2px;width:104.6px"><span class="badge bg-r">Deleted</span></div><div class="td" style="left:495.8px;width:188.7px">Tunnel Termination</div><div class="td" style="left:684.5px;width:217.8px">tunnel2: Termination 2</div><div class="td" style="left:902.3px;width:403.7px"><span class="lk">92d02d9c-562f-49f0-baa8-adb22904760d</span></div></div><div class="tr"><div class="td" style="left:0.0px;width:34.6px"><span class="lk">79</span></div><div class="td" style="left:34.6px;width:169.1px"><span class="lk">2024-01-05 19:14</span></div><div class="td" style="left:203.7px;width:93.8px">admin</div><div class="td" style="left:297.5px;width:93.7px">&mdash;</div><div class="td" style="left:391.2px;width:104.6px"><span class="badge bg-g">Created</span></div><div class="td" style="left:495.8px;width:188.7px">Tunnel Termination</div><div class="td" style="left:684.5px;width:217.8px"><span class="lk">tunnel1: Termination 3</span></div><div class="td" style="left:902.3px;width:403.7px"><span class="lk">f038e755-705e-47f3-9433-5392b9e6b9e5</span></div></div></div></div></div>
<div class="card" style="left:266px;top:1074px;width:428px;height:200px"><div class="ch2 gray"><svg class="g" viewBox="0 0 24 24"><path fill="#fff" d="M12,15.5A3.5,3.5 0 0,1 8.5,12A3.5,3.5 0 0,1 12,8.5A3.5,3.5 0 0,1 15.5,12A3.5,3.5 0 0,1 12,15.5M19.43,12.97C19.47,12.65 19.5,12.33 19.5,12C19.5,11.67 19.47,11.34 19.43,11L21.54,9.37C21.73,9.22 21.78,8.95 21.66,8.73L19.66,5.27C19.54,5.05 19.27,4.96 19.05,5.05L16.56,6.05C16.04,5.66 15.5,5.32 14.87,5.07L14.5,2.42C14.46,2.18 14.25,2 14,2H10C9.75,2 9.54,2.18 9.5,2.42L9.13,5.07C8.5,5.32 7.96,5.66 7.44,6.05L4.95,5.05C4.73,4.96 4.46,5.05 4.34,5.27L2.34,8.73C2.21,8.95 2.27,9.22 2.46,9.37L4.57,11C4.53,11.34 4.5,11.67 4.5,12C4.5,12.33 4.53,12.65 4.57,12.97L2.46,14.63C2.27,14.78 2.21,15.05 2.34,15.27L4.34,18.73C4.46,18.95 4.73,19.03 4.95,18.95L7.44,17.94C7.96,18.34 8.5,18.68 9.13,18.93L9.5,21.58C9.54,21.82 9.75,22 10,22H14C14.25,22 14.46,21.82 14.5,21.58L14.87,18.93C15.5,18.67 16.04,18.34 16.56,17.94L19.05,18.95C19.27,19.03 19.54,18.95 19.66,18.73L21.66,15.27C21.78,15.05 21.73,14.78 21.54,14.63L19.43,12.97Z"/></svg>Circuits<svg class="x" viewBox="0 0 8 8"><path d="M0.3 0.3L7.7 7.7M7.7 0.3L0.3 7.7" stroke="#fff" stroke-width="1.15"/></svg></div><div class="body"><div class="cnt"><span>Providers</span><b>10</b></div><div class="cnt"><span>Circuits</span><b>29</b></div><div class="cnt"><span>Provider Networks</span><b>2</b></div></div></div>
<div class="card" style="left:714px;top:1074px;width:428px;height:200px"><div class="ch2 gray"><svg class="g" viewBox="0 0 24 24"><path fill="#fff" d="M12,15.5A3.5,3.5 0 0,1 8.5,12A3.5,3.5 0 0,1 12,8.5A3.5,3.5 0 0,1 15.5,12A3.5,3.5 0 0,1 12,15.5M19.43,12.97C19.47,12.65 19.5,12.33 19.5,12C19.5,11.67 19.47,11.34 19.43,11L21.54,9.37C21.73,9.22 21.78,8.95 21.66,8.73L19.66,5.27C19.54,5.05 19.27,4.96 19.05,5.05L16.56,6.05C16.04,5.66 15.5,5.32 14.87,5.07L14.5,2.42C14.46,2.18 14.25,2 14,2H10C9.75,2 9.54,2.18 9.5,2.42L9.13,5.07C8.5,5.32 7.96,5.66 7.44,6.05L4.95,5.05C4.73,4.96 4.46,5.05 4.34,5.27L2.34,8.73C2.21,8.95 2.27,9.22 2.46,9.37L4.57,11C4.53,11.34 4.5,11.67 4.5,12C4.5,12.33 4.53,12.65 4.57,12.97L2.46,14.63C2.27,14.78 2.21,15.05 2.34,15.27L4.34,18.73C4.46,18.95 4.73,19.03 4.95,18.95L7.44,17.94C7.96,18.34 8.5,18.68 9.13,18.93L9.5,21.58C9.54,21.82 9.75,22 10,22H14C14.25,22 14.46,21.82 14.5,21.58L14.87,18.93C15.5,18.67 16.04,18.34 16.56,17.94L19.05,18.95C19.27,19.03 19.54,18.95 19.66,18.73L21.66,15.27C21.78,15.05 21.73,14.78 21.54,14.63L19.43,12.97Z"/></svg>DCIM<svg class="x" viewBox="0 0 8 8"><path d="M0.3 0.3L7.7 7.7M7.7 0.3L0.3 7.7" stroke="#fff" stroke-width="1.15"/></svg></div><div class="body"><div class="cnt"><span>Sites</span><b>25</b></div><div class="cnt"><span>Racks</span><b>42</b></div><div class="cnt"><span>Devices</span><b>90</b></div></div></div>

</body></html>
